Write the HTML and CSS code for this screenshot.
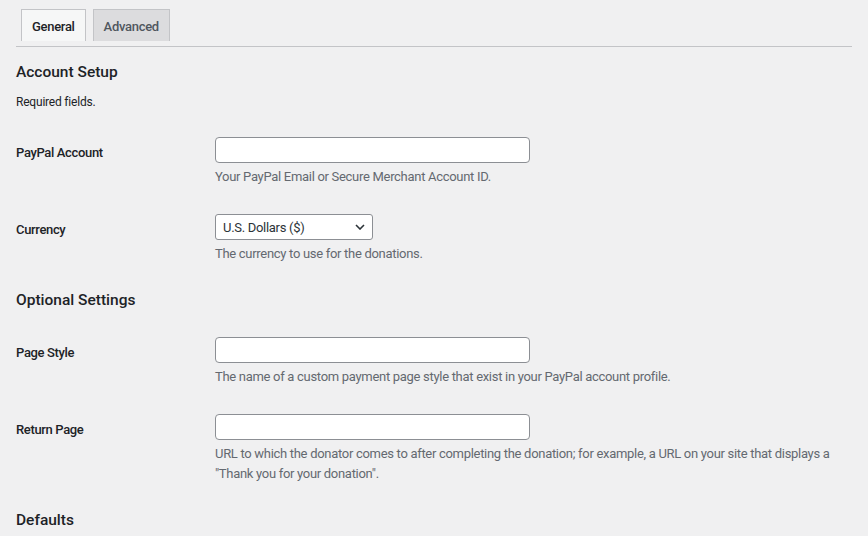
FILE: index.html
```html
<!DOCTYPE html>
<html lang="en">
<head>
<meta charset="utf-8">
<title>Settings</title>
<link rel="stylesheet" href="styles.css">
</head>
<body>
<div class="wrap">
  <nav class="tabs">
    <a class="tab active" href="#">General</a>
    <a class="tab" href="#">Advanced</a>
  </nav>

  <h2 class="section-title first">Account Setup</h2>
  <p class="intro">Required fields.</p>
  <div class="form-table">
    <div class="row">
      <div class="label">PayPal Account</div>
      <div class="field">
        <input class="text-input" type="text">
        <p class="desc">Your PayPal Email or Secure Merchant Account ID.</p>
      </div>
    </div>
    <div class="row">
      <div class="label">Currency</div>
      <div class="field">
        <div class="select-wrap">
          <select class="select"><option>U.S. Dollars ($)</option></select>
          <svg class="chevron" width="10" height="6" viewBox="0 0 10 6"><path d="M1 1l4 4 4-4" fill="none" stroke="#2c3338" stroke-width="1.6"/></svg>
        </div>
        <p class="desc">The currency to use for the donations.</p>
      </div>
    </div>
  </div>

  <h2 class="section-title">Optional Settings</h2>
  <div class="form-table">
    <div class="row">
      <div class="label">Page Style</div>
      <div class="field">
        <input class="text-input" type="text">
        <p class="desc">The name of a custom payment page style that exist in your PayPal account profile.</p>
      </div>
    </div>
    <div class="row">
      <div class="label">Return Page</div>
      <div class="field">
        <input class="text-input" type="text">
        <p class="desc">URL to which the donator comes to after completing the donation; for example, a URL on your site that displays a "Thank you for your donation".</p>
      </div>
    </div>
  </div>

  <h2 class="section-title">Defaults</h2>
</div>
</body>
</html>
```
FILE: styles.css
```css
html, body {
  margin: 0;
  padding: 0;
  background: #f0f0f1;
}
body {
  font-family: Roboto, "Noto Sans", "Liberation Sans", sans-serif;
  font-size: 13px;
  color: #1d2327;
}
.wrap {
  padding: 0 16px 0 16px;
}
.tabs {
  display: flex;
  gap: 7px;
  padding: 9px 0 5px 5px;
  border-bottom: 1px solid #c3c4c7;
}
.tab {
  display: block;
  box-sizing: border-box;
  height: 32px;
  line-height: 33px;
  padding: 0 10px;
  border: 1px solid #c3c4c7;
  border-bottom: none;
  background: #dcdcde;
  color: #50575e;
  font-size: 13px;
  font-weight: 500;
  letter-spacing: -0.3px;
  text-decoration: none;
}
.tab.active {
  background: #f6f7f7;
  color: #1d2327;
}
.section-title {
  margin: 13px 0;
  font-size: 15.5px;
  font-weight: 500;
  line-height: 20px;
  color: #1d2327;
}
.section-title.first {
  margin-top: 15px;
  margin-bottom: 0;
}
.intro {
  margin: 11px 0 12px;
  font-size: 12px;
  line-height: 18px;
  letter-spacing: -0.2px;
}
.row {
  display: grid;
  grid-template-columns: 199px 1fr;
  padding: 14px 0 13px;
}
.label {
  padding-top: 6px;
  line-height: 20px;
  font-weight: 500;
  font-size: 13px;
  letter-spacing: -0.35px;
}
.field {
  min-width: 0;
}
.text-input {
  display: block;
  box-sizing: border-box;
  width: 315px;
  height: 26px;
  margin: 0;
  padding: 0 8px;
  border: 1px solid #8c8f94;
  border-radius: 4px;
  background: #fff;
  font: inherit;
}
.select-wrap {
  position: relative;
  width: 158px;
}
.select {
  display: block;
  box-sizing: border-box;
  width: 158px;
  height: 26px;
  margin: 0;
  padding: 0 24px 0 7px;
  border: 1px solid #8c8f94;
  border-radius: 3px;
  background: #fff;
  color: #2c3338;
  font: inherit;
  font-size: 13px;
  letter-spacing: -0.3px;
  -webkit-appearance: none;
  appearance: none;
}
.chevron {
  position: absolute;
  right: 8px;
  top: 10px;
}
.desc {
  margin: 4px 0 0;
  line-height: 20px;
  color: #646970;
  font-size: 13px;
  letter-spacing: -0.3px;
}
```
